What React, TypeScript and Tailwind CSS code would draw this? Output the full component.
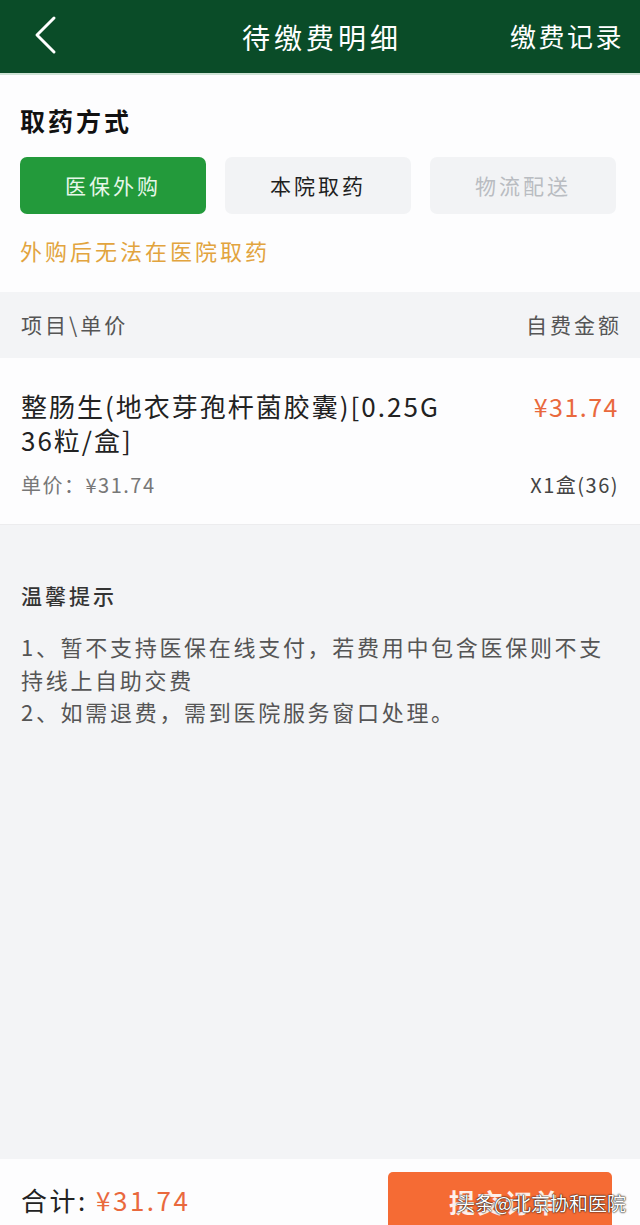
import React from "react";

const font = { fontFamily: '"Noto Sans CJK SC", "Noto Sans", sans-serif' };

const Header = () => (
  <div className="relative flex h-[75px] items-center justify-center bg-[#0a4c28] border-b-2 border-[#cfe3d6]">
    <svg className="absolute left-[30px] top-[15px]" width="30" height="40" viewBox="0 0 30 40">
      <path d="M24 3 L7 20 L24 37" fill="none" stroke="#fff" strokeWidth="3" strokeLinecap="round" strokeLinejoin="round" />
    </svg>
    <div className="pl-[4px] text-[28px] text-white tracking-[4px]">待缴费明细</div>
    <div className="absolute right-[16px] top-[16px] text-[26px] text-white tracking-[2.5px]">缴费记录</div>
  </div>
);

const MethodButton = ({ label, kind }: { label: string; kind: "active" | "normal" | "disabled" }) => {
  const cls =
    kind === "active"
      ? "bg-[#239a3b] text-[#e6f7e9]"
      : kind === "normal"
      ? "bg-[#f2f3f5] text-[#1f1f1f]"
      : "bg-[#f2f3f5] text-[#b9bcc1]";
  return (
    <div className={`flex h-[57px] flex-1 items-center justify-center rounded-[7px] text-[21px] tracking-[3px] ${cls}`}>
      {label}
    </div>
  );
};

export default function App() {
  return (
    <div className="relative flex min-h-[1225px] w-[640px] flex-col bg-[#f3f4f6]" style={font}>
      <Header />

      <div className="bg-[#fdfdfe] pl-[20px] pr-[24px] pb-[28px] pt-[28px]">
        <div className="text-[25px] font-bold leading-[34px] tracking-[3px] text-[#111]">取药方式</div>
        <div className="mt-[20px] flex gap-[19px]">
          <MethodButton label="医保外购" kind="active" />
          <MethodButton label="本院取药" kind="normal" />
          <MethodButton label="物流配送" kind="disabled" />
        </div>
        <div className="mt-[22px] text-[22px] leading-[28px] tracking-[3px] text-[#e2a43e]">外购后无法在医院取药</div>
      </div>

      <div className="flex h-[66px] items-center justify-between px-[21px] text-[21px] tracking-[3px] text-[#555]">
        <span>项目\单价</span>
        <span className="-mr-[3px]">自费金额</span>
      </div>

      <div className="bg-[#fdfdfe] px-[21px] pb-[26px] pt-[31px] border-b border-[#ececee]">
        <div className="flex justify-between">
          <div className="text-[26px] leading-[34px] tracking-[2px] text-[#222]">
            整肠生(地衣芽孢杆菌胶囊)[0.25G
            <br />
            36粒/盒]
          </div>
          <div className="text-[25px] leading-[34px] tracking-[1.5px] text-[#e9693d]">¥31.74</div>
        </div>
        <div className="mt-[15px] flex justify-between text-[20px] leading-[26px] tracking-[1.5px] text-[#777]">
          <span>单价：¥31.74</span>
          <span className="text-[#444]">X1盒(36)</span>
        </div>
      </div>

      <div className="px-[21px] pt-[55px]">
        <div className="text-[21px] font-medium leading-[30px] tracking-[3px] text-[#333]">温馨提示</div>
        <div className="mt-[20px] text-[22px] leading-[32.5px] text-[#555] tracking-[2.7px]">
          <div>1、暂不支持医保在线支付，若费用中包含医保则不支持线上自助交费</div>
          <div>2、如需退费，需到医院服务窗口处理。</div>
        </div>
      </div>

      <div className="flex-1" />

      <div className="flex h-[66px] items-end justify-between bg-[#fdfdfe] pl-[21px] pr-[28px]">
        <div className="mb-[6px] text-[26px] tracking-[2.5px] text-[#222]">
          合计: <span className="text-[#e9693d]">¥31.74</span>
        </div>
        <div className="flex h-[53px] w-[224px] items-center justify-center rounded-t-[5px] bg-[#f56b34] pl-[10px] pt-[6px] text-[26px] font-bold tracking-[2px] text-white/90">
          提交订单
        </div>
      </div>

      <div className="absolute right-[14px] top-[1189px] text-[19px] text-white [text-shadow:0_0_2px_#000,0_0_1px_#000]">
        头条@北京协和医院
      </div>
    </div>
  );
}
